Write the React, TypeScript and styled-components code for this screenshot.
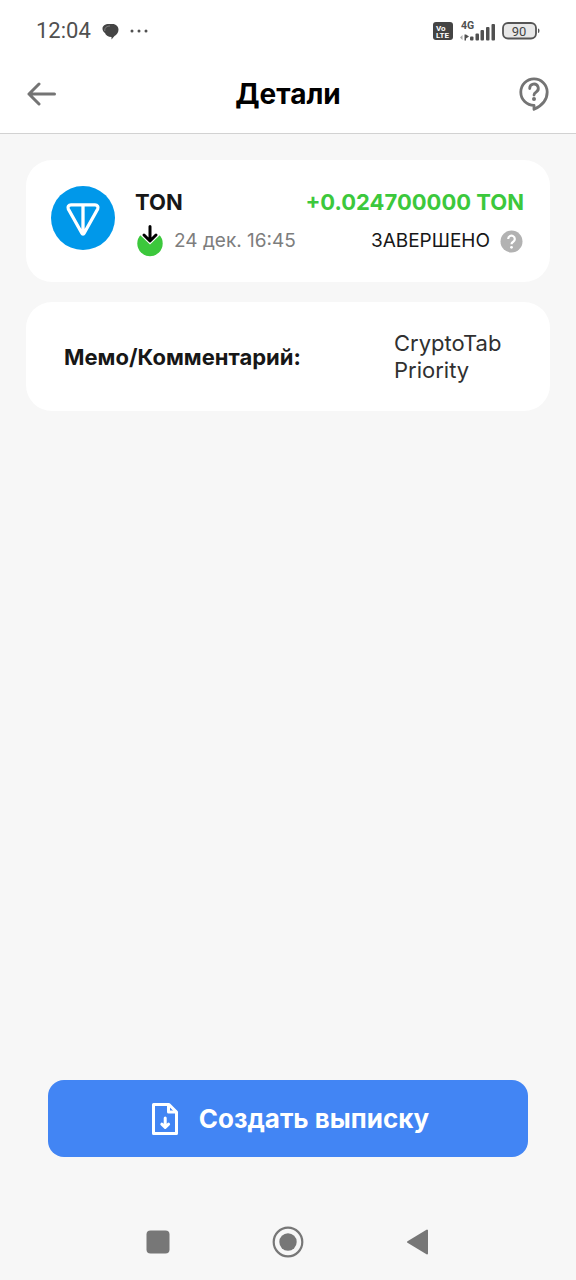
import React from "react";
import styled, { createGlobalStyle } from "styled-components";

const GlobalStyle = createGlobalStyle`
  *, *::before, *::after { box-sizing: border-box; }
  body {
    margin: 0;
    background: #f7f7f7;
    color: #171717;
    font-family: Inter, "Liberation Sans", sans-serif;
  }
  button { font: inherit; border: 0; padding: 0; background: none; cursor: pointer; }
  svg { display: block; flex: none; }
`;

const Screen = styled.div`
  min-height: 100vh;
  display: flex;
  flex-direction: column;
`;

const StatusBar = styled.div`
  display: flex;
  justify-content: space-between;
  align-items: center;
  height: 56px;
  padding: 6px 36px 0;
  background: #fff;
  color: #505050;
  font-family: Roboto, "Liberation Sans", sans-serif;
`;

const StatusGroup = styled.div<{ $gap: number }>`
  display: flex;
  align-items: center;
  gap: ${({ $gap }) => $gap}px;
`;

const Clock = styled.time`
  font-size: 22px;
  line-height: 28px;
`;

const Header = styled.header`
  display: grid;
  grid-template-columns: 48px 1fr 48px;
  align-items: center;
  height: 78px;
  padding: 0 18px 2px;
  background: #fff;
  border-bottom: 1px solid #d2d2d2;
`;

const Title = styled.h1`
  margin: 0;
  font-size: 28px;
  line-height: 36px;
  font-weight: 700;
  color: #000;
  text-align: center;
`;

const IconButton = styled.button`
  display: flex;
  align-items: center;
  justify-content: center;
  width: 48px;
  height: 48px;
`;

const Content = styled.main`
  flex: 1;
  display: flex;
  flex-direction: column;
  gap: 20px;
  padding: 26px;
`;

const Card = styled.section`
  background: #fff;
  border-radius: 26px;
`;

const TransactionCard = styled(Card)`
  display: flex;
  gap: 20px;
  padding: 26px 26px 25px 25px;
`;

const Details = styled.div`
  flex: 1;
  display: flex;
  flex-direction: column;
  gap: 7px;
`;

const Row = styled.div`
  display: flex;
  justify-content: space-between;
  align-items: center;
`;

const Coin = styled.h2<{ $income?: boolean }>`
  margin: 0;
  font-size: 22px;
  line-height: 32px;
  font-weight: 700;
  color: ${({ $income }) => ($income ? "#3cc83c" : "#171717")};
`;

const Meta = styled.div<{ $gap: number; $muted?: boolean }>`
  display: flex;
  align-items: center;
  gap: ${({ $gap }) => $gap}px;
  font-size: 19px;
  line-height: 32px;
  color: ${({ $muted }) => ($muted ? "#7d7d7d" : "#171717")};
`;

const HintButton = styled.button`
  margin-right: 1px;
`;

const MemoCard = styled(Card)`
  display: grid;
  grid-template-columns: 1fr 118px;
  align-items: center;
  padding: 28px 38px 27px;
  font-size: 22px;
  line-height: 27px;
`;

const MemoLabel = styled.strong`
  font-weight: 700;
`;

const MemoValue = styled.span`
  color: #303030;
`;

const Footer = styled.footer`
  padding: 0 48px 47px;
`;

const PrimaryButton = styled.button`
  display: flex;
  align-items: center;
  justify-content: center;
  gap: 20px;
  width: 100%;
  height: 77px;
  border-radius: 16px;
  && { background: #4285f4; padding-left: 4px; }
  color: #fff;
  && { font-size: 26px; font-weight: 700; line-height: 32px; }
`;

const SystemNav = styled.nav`
  display: flex;
  justify-content: center;
  align-items: center;
  gap: 82px;
  height: 76px;
`;

const BubbleIcon = () => (
  <svg width="17" height="17" viewBox="0 0 17 17">
    <path d="M7 1h3.500C14 1 16.500 3.500 16.500 6.800c0 3-2 5.200-4 6.200L9.500 16.500V14C6 14 3.500 12 3 10 1 8.500.5 7 .5 5.500.5 3 3 1 7 1Z" fill="#444" />
    <path d="M2.800 8C2.300 4.500 5 3 8 3" fill="none" stroke="#999" strokeWidth=".7" />
  </svg>
);

const DotsIcon = () => (
  <svg width="18" height="4" viewBox="0 0 18 4" fill="#505050">
    <circle cx="2" cy="2" r="1.500" />
    <circle cx="9" cy="2" r="1.500" />
    <circle cx="16" cy="2" r="1.500" />
  </svg>
);

const VolteIcon = () => (
  <svg width="20" height="18" viewBox="0 0 20 18">
    <rect width="20" height="18" rx="3" fill="#444" />
    <g fill="#fff" fontFamily="Roboto, sans-serif" fontWeight="700">
      <text x="3" y="8.500" fontSize="8">Vo</text>
      <text x="3" y="16" fontSize="8">LTE</text>
    </g>
  </svg>
);

const SignalIcon = () => (
  <svg width="35" height="22" viewBox="0 0 35 22" fill="#505050">
    <text x="1" y="9" fontFamily="Roboto, sans-serif" fontWeight="700" fontSize="10.500">4G</text>
    <path d="M0 17.500 2.500 15v5Z" opacity=".5" />
    <path d="M4.500 14.500h1.500v6H4.500ZM6 14.500l3 2-3 2Z" />
    <rect x="10" y="16.500" width="3.500" height="4" rx="1" />
    <rect x="15.500" y="13.500" width="3.500" height="7" rx="1" />
    <rect x="20.500" y="10" width="3.500" height="10.500" rx="1" />
    <rect x="26" y="7" width="3.500" height="13.500" rx="1" />
    <rect x="31.500" y="4" width="3.500" height="16.500" rx="1" />
  </svg>
);

const BatteryIcon = () => (
  <svg width="38" height="18" viewBox="0 0 38 18">
    <rect x="1" y="1" width="33" height="15.500" rx="5" fill="#e8e8e8" stroke="#555" strokeWidth="1.800" />
    <path d="M36 6.500q1.500 0 1.500 2.200T36 11Z" fill="#555" />
    <text x="17" y="13.500" textAnchor="middle" fontFamily="Roboto, sans-serif" fontSize="13" fill="#444">90</text>
  </svg>
);

const BackArrow = () => (
  <svg width="30" height="24" viewBox="0 0 30 24" fill="none" stroke="#747474" strokeWidth="3" strokeLinecap="round" strokeLinejoin="round">
    <path d="M27.500 12H2M12 2 2 12l10 10" />
  </svg>
);

const SupportIcon = () => (
  <svg width="30" height="34" viewBox="0 0 30 34" fill="none" stroke="#747474" strokeWidth="2.800" strokeLinejoin="round">
    <path d="M15 28.300A13.200 13.200 0 1 1 28.200 15c0 7.500-5.500 13.800-13.200 17.300Z" />
    <path d="M10.700 11.500a4.300 4.300 0 1 1 6.500 3.500c-1.500.9-2.200 1.400-2.200 3" strokeLinecap="round" />
    <circle cx="15" cy="22" r="2" fill="#747474" stroke="none" />
  </svg>
);

const TonLogo = () => (
  <svg width="64" height="64" viewBox="0 0 64 64" role="img" aria-label="TON">
    <circle cx="32" cy="32" r="32" fill="#0098ea" />
    <path d="M20 18.800h24c2.300 0 3.700 2.200 2.700 4.200L33.100 47.300c-.5 1-1.700 1-2.200 0L17.300 23c-1-2 .4-4.200 2.700-4.200ZM32 18.800v28" fill="none" stroke="#fff" strokeWidth="3.300" strokeLinejoin="round" />
  </svg>
);

const ReceivedIcon = () => (
  <svg width="28" height="32" viewBox="0 0 28 32" fill="none">
    <circle cx="15" cy="18.500" r="12.700" fill="#3cc83c" />
    <path d="M0 0h28v9.500h-2.500L15 19.500 4.500 9.500H0Z" fill="#fff" />
    <path d="M15 1.500v14M9 10l6 6 6-6" stroke="#000" strokeWidth="3" strokeLinecap="round" strokeLinejoin="round" />
  </svg>
);

const HintIcon = () => (
  <svg width="23" height="23" viewBox="0 0 23 23" fill="none">
    <circle cx="11.500" cy="11.500" r="11" fill="#b2b2b2" />
    <path d="M8.200 9a3.300 3.300 0 1 1 5 2.800c-1.300.8-1.700 1.100-1.700 2.400" stroke="#fff" strokeWidth="2.200" />
    <circle cx="11.500" cy="17.300" r="1.400" fill="#fff" />
  </svg>
);

const StatementIcon = () => (
  <svg width="28" height="34" viewBox="0 0 28 34" fill="none" stroke="#fff" strokeWidth="3" strokeLinejoin="round">
    <path d="M2.500 2.500H18l7.500 7.500v21.500h-23Z" />
    <path d="M17.500 2.500V10h8" />
    <path d="M14.200 16v9M10.800 22.200l3.400 3.300 3.400-3.300" strokeLinecap="round" />
  </svg>
);

const RecentsIcon = () => (
  <svg width="24" height="24" viewBox="0 0 24 24">
    <rect x=".5" y=".5" width="23" height="23" rx="4" fill="#777" />
  </svg>
);

const HomeIcon = () => (
  <svg width="32" height="32" viewBox="0 0 32 32">
    <circle cx="16" cy="16" r="14.300" fill="none" stroke="#777" strokeWidth="2.200" />
    <circle cx="16" cy="16" r="8.700" fill="#777" />
  </svg>
);

const BackIcon = () => (
  <svg width="24" height="28" viewBox="0 0 24 28">
    <path d="M2 14 21 2.500v23Z" fill="#777" stroke="#777" strokeWidth="2" strokeLinejoin="round" />
  </svg>
);

export default function App() {
  return (
    <>
      <GlobalStyle />
      <Screen>
        <StatusBar>
          <StatusGroup $gap={11}>
            <Clock>12:04</Clock>
            <BubbleIcon />
            <DotsIcon />
          </StatusGroup>
          <StatusGroup $gap={7}>
            <VolteIcon />
            <SignalIcon />
            <BatteryIcon />
          </StatusGroup>
        </StatusBar>

        <Header>
          <IconButton aria-label="Назад"><BackArrow /></IconButton>
          <Title>Детали</Title>
          <IconButton aria-label="Поддержка"><SupportIcon /></IconButton>
        </Header>

        <Content>
          <TransactionCard>
            <TonLogo />
            <Details>
              <Row>
                <Coin>TON</Coin>
                <Coin as="span" $income>+0.024700000 TON</Coin>
              </Row>
              <Row>
                <Meta $gap={11} $muted>
                  <ReceivedIcon />
                  <time>24 дек. 16:45</time>
                </Meta>
                <Meta $gap={10}>
                  ЗАВЕРШЕНО
                  <HintButton aria-label="Подробнее о статусе"><HintIcon /></HintButton>
                </Meta>
              </Row>
            </Details>
          </TransactionCard>

          <MemoCard>
            <MemoLabel>Мемо/Комментарий:</MemoLabel>
            <MemoValue>CryptoTab Priority</MemoValue>
          </MemoCard>
        </Content>

        <Footer>
          <PrimaryButton>
            <StatementIcon />
            Создать выписку
          </PrimaryButton>
        </Footer>

        <SystemNav>
          <IconButton aria-label="Недавние"><RecentsIcon /></IconButton>
          <IconButton aria-label="Домой"><HomeIcon /></IconButton>
          <IconButton aria-label="Назад"><BackIcon /></IconButton>
        </SystemNav>
      </Screen>
    </>
  );
}
